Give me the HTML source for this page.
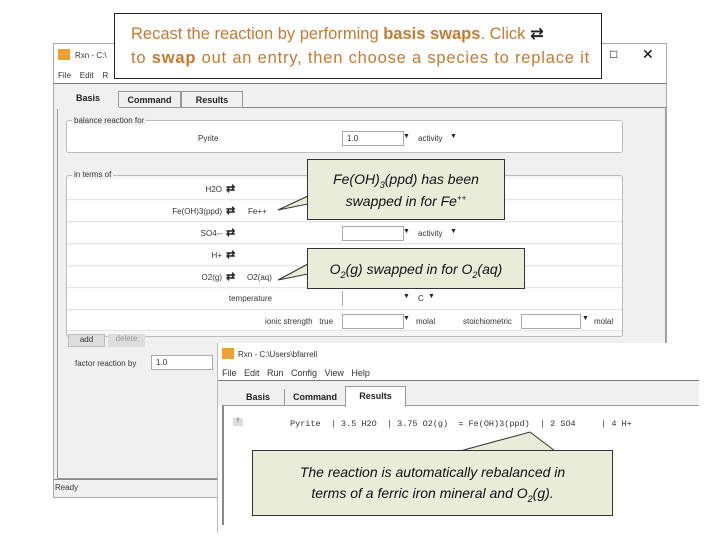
<!DOCTYPE html>
<html><head><style>
*{margin:0;padding:0;box-sizing:border-box}
body{width:720px;height:540px;background:#fff;position:relative;overflow:hidden;font-family:"Liberation Sans",sans-serif}
.a{position:absolute}
.s{font-size:8px;color:#333;white-space:nowrap}
.cb{position:absolute;height:15px;background:#fff;border:1px solid #aaa}
.ar{position:absolute;font-size:7px;color:#222}
.sw{position:absolute;font-size:11px;font-weight:bold;color:#222;line-height:10px}
.row{position:absolute;left:67px;width:555px;height:21px;background:#fff;border-bottom:1px solid #e4e4e4}
.lab{position:absolute;right:0;width:140px;text-align:right;font-size:8px;color:#333}
.call{position:absolute;background:#e9ecd9;border:1px solid #333;font-family:"Liberation Sans",sans-serif;font-style:italic;color:#111;text-align:center}
sub,sup{line-height:0}
</style></head><body>
<div class="a" style="left:53px;top:43px;width:614px;height:455px;border:1px solid #aaa;background:#f0f0f0"></div>
<div class="a" style="left:54px;top:44px;width:612px;height:40px;background:#fff"></div>
<div class="a" style="left:58px;top:49px;width:12px;height:11px;background:#f0a030"></div>
<div class="a s" style="left:75px;top:51px">Rxn - C:\</div>
<div class="a" style="left:610px;top:47px;font-size:12px">&#9633;</div>
<div class="a" style="left:642px;top:46px;font-size:14px">&#10005;</div>
<div class="a s" style="left:58px;top:71px">File&nbsp;&nbsp;&nbsp; Edit&nbsp;&nbsp;&nbsp; R</div>
<div class="a" style="left:54px;top:83px;width:612px;height:1px;background:#777"></div>
<div class="a" style="left:57px;top:107px;width:609px;height:372px;border:1px solid #999;border-top:1px solid #888"></div>
<div class="a" style="left:57px;top:89px;width:62px;height:19px;background:#f0f0f0;font-size:9px;font-weight:bold;text-align:center;line-height:19px;color:#222">Basis</div>
<div class="a" style="left:118px;top:91px;width:63px;height:17px;border:1px solid #999;font-size:9px;font-weight:bold;text-align:center;line-height:16px;color:#222">Command</div>
<div class="a" style="left:181px;top:91px;width:62px;height:17px;border:1px solid #999;font-size:9px;font-weight:bold;text-align:center;line-height:16px;color:#222">Results</div>
<div class="a" style="left:57px;top:107px;width:62px;height:2px;background:#f0f0f0"></div>
<div class="a" style="left:66px;top:120px;width:557px;height:33px;border:1px solid #bbb;border-radius:3px;background:#fff"></div>
<div class="a s" style="left:72px;top:116px;background:#f0f0f0;padding:0 2px">balance reaction for</div>
<div class="a s" style="left:198px;top:134px">Pyrite</div>
<div class="cb" style="left:342px;top:131px;width:62px"><span class="s" style="position:absolute;left:4px;top:2px">1.0</span></div>
<div class="ar" style="left:403px;top:133px">&#9660;</div>
<div class="a s" style="left:418px;top:134px">activity</div><div class="ar" style="left:450px;top:133px">&#9660;</div>
<div class="a" style="left:66px;top:175px;width:557px;height:162px;border:1px solid #bbb;border-radius:3px;background:#f6f6f6"></div>
<div class="a s" style="left:72px;top:170px;background:#f0f0f0;padding:0 2px">in terms of</div>
<div class="row" style="top:179px"><div class="lab" style="right:400px;top:6px">H2O</div></div>
<div class="row" style="top:201px"><div class="lab" style="right:400px;top:6px">Fe(OH)3(ppd)</div></div>
<div class="row" style="top:223px"><div class="lab" style="right:400px;top:6px">SO4--</div></div>
<div class="row" style="top:245px"><div class="lab" style="right:400px;top:6px">H+</div></div>
<div class="row" style="top:267px"><div class="lab" style="right:400px;top:6px">O2(g)</div></div>
<div class="row" style="top:289px"><div class="lab" style="right:350px;top:5px">temperature</div></div>
<div class="row" style="top:311px;height:20px"></div>
<div class="sw" style="left:226px;top:184px">&#8644;</div>
<div class="sw" style="left:226px;top:206px">&#8644;</div>
<div class="sw" style="left:226px;top:228px">&#8644;</div>
<div class="sw" style="left:226px;top:250px">&#8644;</div>
<div class="sw" style="left:226px;top:272px">&#8644;</div>
<div class="a s" style="left:248px;top:207px">Fe++</div>
<div class="a s" style="left:247px;top:273px">O2(aq)</div>
<div class="cb" style="left:342px;top:226px;width:62px"></div><div class="ar" style="left:403px;top:228px">&#9660;</div>
<div class="a s" style="left:418px;top:229px">activity</div><div class="ar" style="left:450px;top:228px">&#9660;</div>
<div class="a" style="left:342px;top:291px;width:1px;height:15px;background:#aaa"></div>
<div class="ar" style="left:403px;top:293px">&#9660;</div><div class="a s" style="left:418px;top:294px">C</div><div class="ar" style="left:428px;top:293px">&#9660;</div>
<div class="a s" style="left:265px;top:317px">ionic strength&nbsp;&nbsp; true</div>
<div class="cb" style="left:342px;top:314px;width:62px"></div><div class="ar" style="left:403px;top:315px">&#9660;</div>
<div class="a s" style="left:416px;top:317px">molal</div>
<div class="a s" style="left:463px;top:317px">stoichiometric</div>
<div class="cb" style="left:521px;top:314px;width:60px"></div><div class="ar" style="left:582px;top:315px">&#9660;</div>
<div class="a s" style="left:594px;top:317px">molal</div>
<div class="a" style="left:68px;top:334px;width:37px;height:13px;background:#ddd;border:1px solid #bbb;font-size:8px;text-align:center;color:#333">add</div>
<div class="a" style="left:108px;top:334px;width:37px;height:13px;background:#ddd;font-size:8px;text-align:center;color:#999">delete</div>
<div class="a s" style="left:75px;top:359px">factor reaction by</div>
<div class="cb" style="left:151px;top:355px;width:62px"><span class="s" style="position:absolute;left:4px;top:2px">1.0</span></div>
<div class="a" style="left:54px;top:479px;width:612px;height:1px;background:#888"></div>
<div class="a s" style="left:55px;top:483px">Ready</div>
<div class="a" style="left:217px;top:343px;width:482px;height:190px;background:#fff;border-left:1px solid #bbb"></div>
<div class="a" style="left:222px;top:348px;width:12px;height:11px;background:#f0a030"></div>
<div class="a s" style="left:238px;top:350px">Rxn - C:\Users\bfarrell</div>
<div class="a s" style="left:222px;top:368px;font-size:9px">File&nbsp;&nbsp; Edit&nbsp;&nbsp; Run&nbsp;&nbsp; Config&nbsp;&nbsp; View&nbsp;&nbsp; Help</div>
<div class="a" style="left:218px;top:380px;width:481px;height:1px;background:#777"></div>
<div class="a" style="left:218px;top:381px;width:481px;height:25px;background:#f0f0f0"></div>
<div class="a" style="left:222px;top:405px;width:477px;height:1px;background:#999"></div>
<div class="a" style="left:222px;top:405px;width:2px;height:120px;background:#888"></div>
<div class="a" style="left:232px;top:388px;width:52px;height:18px;font-size:9px;font-weight:bold;text-align:center;line-height:18px;color:#222">Basis</div>
<div class="a" style="left:284px;top:389px;width:1px;height:17px;background:#999"></div>
<div class="a" style="left:285px;top:388px;width:60px;height:18px;font-size:9px;font-weight:bold;text-align:center;line-height:18px;color:#222">Command</div>
<div class="a" style="left:345px;top:386px;width:61px;height:21px;background:#fff;border:1px solid #999;border-bottom:none;font-size:9px;font-weight:bold;text-align:center;line-height:18px;color:#222">Results</div>
<div class="a" style="left:233px;top:418px;width:10px;height:8px;background:#ddd;font-size:6px;text-align:center">!</div>
<div class="a" style="left:290px;top:419px;font-family:'Liberation Mono',monospace;font-size:8.5px;color:#333;white-space:pre">Pyrite  | 3.5 H2O  | 3.75 O2(g)  = Fe(OH)3(ppd)  | 2 SO4     | 4 H+</div>
<svg class="a" style="left:0;top:0" width="720" height="540">
<polygon points="308,196 278,210 308,204" fill="#e9ecd9" stroke="#333"/>
<polygon points="308,264 278,280 308,274" fill="#e9ecd9" stroke="#333"/>
<polygon points="460,451 530,432 555,451" fill="#e9ecd9" stroke="#333"/>
</svg>
<div class="call" style="left:307px;top:159px;width:198px;height:61px;font-size:14px;line-height:22px;padding-top:8px">Fe(OH)<sub style="font-size:9px">3</sub>(ppd) has been<br>swapped in for Fe<sup style="font-size:8px">++</sup></div>
<div class="call" style="left:307px;top:248px;width:218px;height:41px;font-size:14px;line-height:40px">O<sub style="font-size:9px">2</sub>(g) swapped in for O<sub style="font-size:9px">2</sub>(aq)</div>
<div class="call" style="left:252px;top:450px;width:361px;height:66px;font-size:14px;line-height:21px;padding-top:11px">The reaction is automatically rebalanced in<br>terms of a ferric iron mineral and O<sub style="font-size:9px">2</sub>(g).</div>
<div class="a" style="left:114px;top:13px;width:488px;height:66px;background:#fff;border:1px solid #222;color:#c47a2f;font-size:16.5px;line-height:24px;padding:8px 0 0 16px;white-space:nowrap;font-family:'Liberation Sans','DejaVu Sans',sans-serif">Recast the reaction by performing <b>basis swaps</b>. Click <span style="color:#222;font-weight:bold">&#8644;</span><br><span style="letter-spacing:0.8px">to <b>swap</b> out an entry, then choose a species to replace it</span></div>
</body></html>
